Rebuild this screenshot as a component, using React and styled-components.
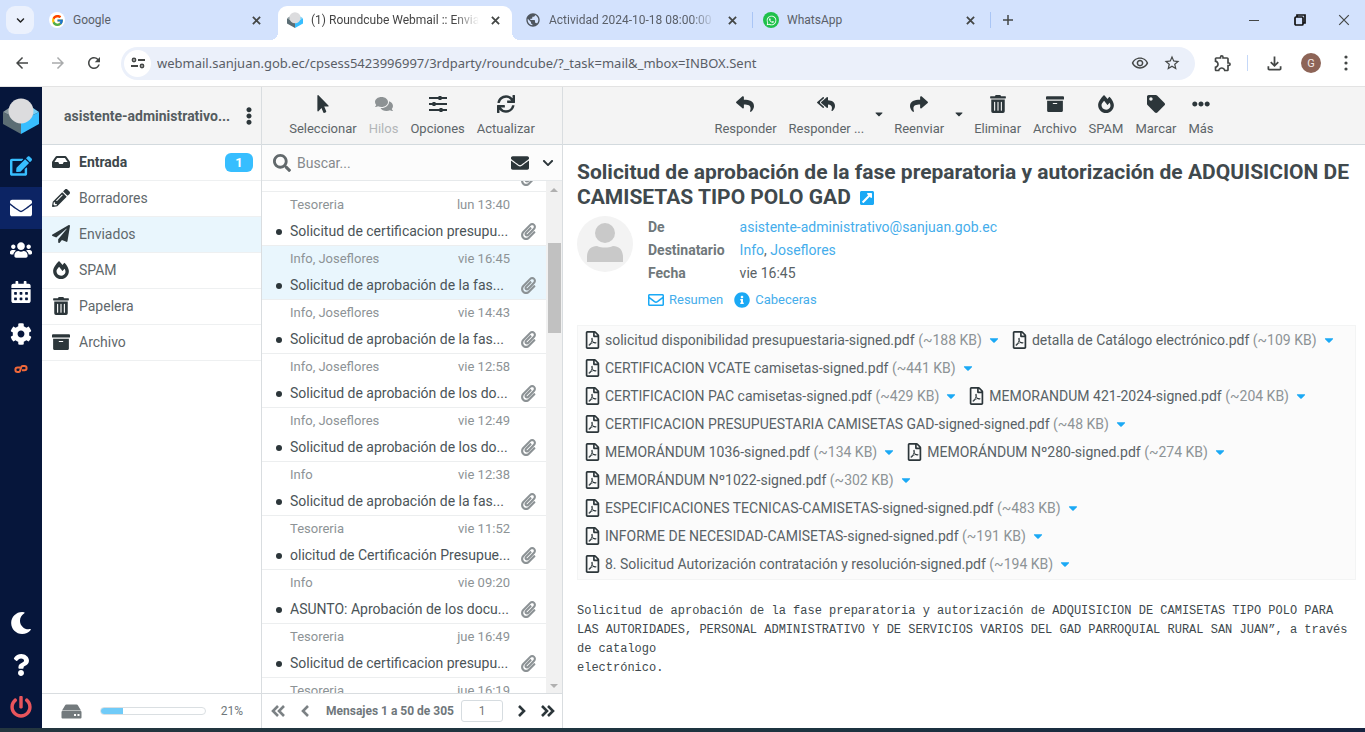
import React, { useEffect, useRef } from "react";
import styled, { createGlobalStyle, css } from "styled-components";
import {
  FaArchive,
  FaCalendarAlt,
  FaCaretDown,
  FaChevronDown,
  FaCog,
  FaComments,
  FaEdit,
  FaEllipsisH,
  FaEllipsisV,
  FaEnvelope,
  FaExternalLinkSquareAlt,
  FaFireAlt,
  FaInbox,
  FaInfoCircle,
  FaMoon,
  FaMousePointer,
  FaPaperclip,
  FaPaperPlane,
  FaPencilAlt,
  FaPowerOff,
  FaQuestion,
  FaRegEnvelope,
  FaRegFilePdf,
  FaReply,
  FaReplyAll,
  FaSearch,
  FaShare,
  FaSync,
  FaTag,
  FaTrashAlt,
  FaUsers,
  FaWhatsapp,
} from "react-icons/fa";
import { FcGoogle } from "react-icons/fc";
import {
  MdArrowBack,
  MdArrowForward,
  MdOutlineExtension,
  MdOutlineFileDownload,
  MdOutlineRemoveRedEye,
  MdPublic,
  MdRefresh,
  MdStarBorder,
} from "react-icons/md";

const GlobalStyle = createGlobalStyle`
  * {
    box-sizing: border-box;
  }
  body {
    margin: 0;
    font-family: Roboto, sans-serif;
    font-size: 14px;
    color: #2c363a;
  }
  button {
    border: 0;
    padding: 0;
    background: none;
    font: inherit;
    color: inherit;
    cursor: pointer;
  }
  a {
    color: inherit;
    text-decoration: none;
  }
  ul {
    list-style: none;
    margin: 0;
    padding: 0;
  }
  svg {
    flex: none;
  }
`;

const Page = styled.div`
  display: flex;
  flex-direction: column;
  height: 100vh;
  overflow: hidden;
  background: #fff;
`;

/* browser */
const TabStrip = styled.div`
  display: flex;
  align-items: flex-end;
  height: 40px;
  padding-left: 6px;
  background: #d3e2fd;
  font: 12px Roboto, sans-serif;
  color: #5a5f68;
`;
const TabSearch = styled.button`
  display: flex;
  align-items: center;
  justify-content: center;
  width: 28px;
  height: 28px;
  margin: 0 6px 6px 0;
  border-radius: 9px;
  background: #ebf1fd;
  font-size: 9px;
  color: #222;
`;
const Tab = styled.div`
  position: relative;
  display: flex;
  align-items: center;
  flex: 0 1 238px;
  min-width: 0;
  height: 34px;
  padding: 0 14px 6px 9px;
  gap: 8px;

  ${(props) =>
    props.$line &&
    css`
      &::after {
        content: "";
        position: absolute;
        right: 1px;
        top: 6px;
        width: 1px;
        height: 16px;
        background: #a9c5f5;
      }
    `}
  ${(props) =>
    props.$active &&
    css`
      margin-right: 4px;
      flex-basis: 234px;
      padding-right: 9px;
      background: #fff;
      border-radius: 9px 9px 0 0;
      color: #444;
      &::before,
      &::after {
        content: "";
        position: absolute;
        bottom: 0;
        width: 8px;
        height: 8px;
      }
      &::before {
        left: -8px;
        background: radial-gradient(circle at 0 0, transparent 8px, #fff 8px);
      }
      &::after {
        right: -8px;
        background: radial-gradient(circle at 100% 0, transparent 8px, #fff 8px);
      }
    `}
`;
const TabTitle = styled.span`
  flex: 1;
  min-width: 0;
  overflow: hidden;
  white-space: nowrap;
  mask-image: ${(props) => (props.$fade ? "linear-gradient(to right, #000 85%, transparent)" : "none")};
`;
const Favicon = styled.span`
  display: flex;
  align-items: center;
  justify-content: center;
  width: 16px;
  height: 16px;
  border-radius: 50%;
  font-size: ${(props) => props.$size || 16}px;
  background: ${(props) => props.$bg || "none"};
  color: ${(props) => props.$color || "#4f565e"};
`;
const IconButton = styled.button`
  display: flex;
  align-items: center;
  justify-content: center;
  width: ${(props) => props.$width || 16}px;
  height: ${(props) => props.$height || 16}px;
  font-size: ${(props) => props.$size || 18}px;
  color: ${(props) => props.$color || "#444746"};
`;
const WindowButtons = styled.div`
  display: flex;
  align-items: center;
  height: 40px;
  margin-left: auto;
`;
const BrowserBar = styled.div`
  display: flex;
  align-items: center;
  height: 46px;
  padding: 0 6px 0 4px;
  background: #fff;
`;
const Omnibox = styled.div`
  flex: 1;
  display: flex;
  align-items: center;
  height: 33px;
  margin: 0 14px 0 9px;
  padding: 0 7px 0 3px;
  border-radius: 17px;
  background: #ebf0fa;
`;
const SiteInfo = styled.button`
  display: flex;
  align-items: center;
  justify-content: center;
  width: 27px;
  height: 27px;
  border-radius: 50%;
  background: #fff;
`;
const Address = styled.input`
  flex: 1;
  min-width: 0;
  margin-left: 6px;
  padding: 0;
  border: 0;
  outline: 0;
  background: none;
  font: 13px "Noto Sans", "Open Sans", sans-serif;
  color: #5a5e66;
`;
const BarLine = styled.span`
  width: 1px;
  height: 16px;
  margin: 0 8px 0 10px;
  background: #c5d8f8;
`;
const Profile = styled.button`
  width: 20px;
  height: 20px;
  margin: 0 12px 0 9px;
  border-radius: 50%;
  background: #8d6457;
  color: #f3e9e5;
  font-size: 11px;
`;
const TaskBar = styled.footer`
  height: 4px;
  background: linear-gradient(to right, #24363f, #1c3440 60%, #16233f);
`;

/* webmail */
const Layout = styled.div`
  flex: 1;
  min-height: 0;
  display: grid;
  grid-template-columns: 42px 220px 301px minmax(0, 1fr);
  border-top: 1px solid #e3e3e3;
`;
const TaskMenu = styled.nav`
  display: flex;
  flex-direction: column;
  background: #06163b;
`;
const Logo = styled.div`
  display: flex;
  align-items: center;
  justify-content: center;
  height: 58px;
`;
const TaskLink = styled.a`
  display: flex;
  align-items: center;
  justify-content: center;
  height: ${(props) => (props.$small ? 28 : 42)}px;
  margin-top: ${(props) => (props.$push ? "auto" : "0")};
  font-size: ${(props) => props.$size || 22}px;
  color: ${(props) => props.$color || "#fff"};
  background: ${(props) => (props.$active ? "#0c2464" : "none")};
`;
const Column = styled.section`
  display: flex;
  flex-direction: column;
  min-width: 0;
  min-height: 0;
  border-right: ${(props) => (props.$last ? "0" : "1px solid #d9dde0")};
`;
const Header = styled.header`
  display: flex;
  align-items: center;
  justify-content: ${(props) => (props.$spread ? "space-between" : "center")};
  flex: none;
  height: 58px;
  padding: ${(props) => (props.$spread ? "0 8px 0 22px" : "0")};
  background: #f4f4f4;
  border-bottom: 1px solid #d3dade;
`;
const Account = styled.h1`
  margin: 0;
  font-size: 14px;
  font-weight: 700;
  color: #555c60;
`;
const Folder = styled.a`
  display: flex;
  align-items: center;
  height: 36px;
  padding: 0 8px 1px 10px;
  gap: 9px;
  border-bottom: 1px solid #eef0f1;
  background: ${(props) => (props.$active ? "#e9f6fd" : "#fff")};
  font-weight: ${(props) => (props.$unread ? 700 : 400)};
  color: ${(props) => (props.$unread ? "#3d474b" : "#5f686c")};
  svg {
    width: 18px;
    font-size: 18px;
    color: #2c363a;
  }
`;
const Badge = styled.span`
  width: 28px;
  margin-left: auto;
  border-radius: 6px;
  background: #37beff;
  color: #fff;
  font-size: 13px;
  line-height: 19px;
  text-align: center;
`;
const PanelFooter = styled.footer`
  display: flex;
  align-items: center;
  flex: none;
  height: 35px;
  margin-top: auto;
  padding: ${(props) => props.$padding};
  border-top: 1px solid #d9dde0;
  background: #fff;
  font-size: 12px;
  color: #6f777b;
`;
const QuotaBar = styled.div`
  flex: 1;
  height: 8px;
  margin: 0 15px 0 18px;
  border: 1px solid #dadfe2;
  border-radius: 4px;
  overflow: hidden;
`;
const QuotaFill = styled.div`
  height: 100%;
  background: #70cbf8;
`;

const ToolButton = styled.button`
  display: flex;
  flex-direction: column;
  align-items: center;
  gap: 8px;
  padding: 0 6px;
  font-size: 13px;
  line-height: 16px;
  white-space: nowrap;
  color: ${(props) => (props.$faded ? "#b3b6b8" : "#5d6569")};
  svg {
    font-size: 18px;
    color: ${(props) => (props.$faded ? "#8d9294" : "#2c363a")};
  }
`;
const ToolCaret = styled.button`
  width: 18px;
  height: 18px;
  font-size: 12px;
  color: #2c363a;
`;
const SearchBar = styled.div`
  display: flex;
  align-items: center;
  flex: none;
  height: 36px;
  padding: 0 0 0 11px;
  border-bottom: 1px solid #e6e9eb;
  background: #fcfcfc;
`;
const SearchInput = styled.input`
  flex: 1;
  min-width: 0;
  margin: 0 6px;
  padding: 0;
  border: 0;
  outline: 0;
  background: none;
  font: 14px Roboto, sans-serif;
  color: #555;
  &::placeholder {
    color: #85898c;
  }
`;
const ListArea = styled.div`
  flex: 1;
  min-height: 0;
  display: flex;
`;
const MailList = styled.ul`
  flex: 1;
  min-width: 0;
  overflow: hidden;
`;
const MailRow = styled.li`
  display: grid;
  grid-template-columns: minmax(0, 1fr) auto;
  align-content: start;
  column-gap: 13px;
  height: 54px;
  padding: 3px 9px 0 28px;
  border-top: 1px solid #eceeef;
  background: ${(props) => (props.$active ? "#e9f6fd" : "#fff")};
`;
const MailMeta = styled.div`
  display: flex;
  justify-content: space-between;
  grid-column: 1;
  font-size: 13px;
  line-height: 20px;
  color: #8d9396;
  span + span {
    margin-right: -3px;
  }
`;
const MailSubject = styled.a`
  position: relative;
  grid-column: 1;
  font-size: 14px;
  line-height: 32px;
  white-space: nowrap;
  color: #4b5458;
  &::before {
    content: "";
    position: absolute;
    left: -14px;
    top: 14px;
    width: 6px;
    height: 6px;
    border-radius: 50%;
    background: #2c363a;
  }
`;
const Clip = styled(FaPaperclip)`
  grid-column: 2;
  align-self: center;
  font-size: 17px;
  color: #8c9295;
`;
const ScrollTrack = styled.div`
  display: flex;
  flex-direction: column;
  align-items: center;
  width: 16px;
  padding: 5px 1px;
  background: #f1f1f1;
`;
const ScrollArrow = styled.span`
  border: 4px solid transparent;
  border-top: ${(props) => (props.$down ? "4px solid #b0b0b0" : "0")};
  border-bottom: ${(props) => (props.$down ? "0" : "4px solid #b0b0b0")};
  margin-top: ${(props) => (props.$down ? "auto" : "2px")};
`;
const ScrollThumb = styled.div`
  width: 13px;
  height: 90px;
  margin-top: 51px;
  background: #c1c1c1;
`;
const PageCount = styled.span`
  flex: 1;
  text-align: center;
  white-space: nowrap;
  font-weight: 700;
`;
const PageInput = styled.input`
  width: 42px;
  height: 22px;
  margin-right: 7px;
  border: 1px solid #d6dce0;
  border-radius: 3px;
  text-align: center;
  font: 12px Roboto, sans-serif;
  color: #777;
`;

const Message = styled.article`
  flex: 1;
  min-height: 0;
  overflow: hidden;
  padding: 15px 9px 0 14px;
`;
const Subject = styled.h2`
  margin: 0 0 6px;
  font-size: 21px;
  line-height: 25px;
  font-weight: 700;
  color: #40494d;
  svg {
    margin-left: 3px;
    font-size: 16px;
    vertical-align: -2px;
    color: #1ba9f5;
  }
`;
const Envelope = styled.div`
  display: flex;
  gap: 15px;
`;
const Photo = styled.svg`
  width: 56px;
  height: 56px;
`;
const Headers = styled.table`
  border-collapse: collapse;
  line-height: 23px;
  th {
    padding: 0 15px 0 0;
    text-align: left;
    font-size: 14px;
    font-weight: 700;
    color: #70787b;
  }
  td {
    padding: 0;
    font-size: 14px;
    color: #596266;
  }
  td a {
    color: #45adeb;
  }
`;
const HeaderLinks = styled.div`
  display: flex;
  gap: 11px;
  margin-top: 6px;
  margin-bottom: 16px;
  a {
    display: flex;
    align-items: center;
    gap: 5px;
    font-size: 13px;
    line-height: 18px;
    color: #45adeb;
  }
  svg {
    font-size: 16px;
    color: #1ba9f5;
  }
`;
const Attachments = styled.ul`
  display: flex;
  flex-wrap: wrap;
  column-gap: 11px;
  padding: 0 7px 1px;
  border: 1px solid #f3f4f4;
  background: #fbfbfb;
`;
const Attachment = styled.li`
  display: flex;
  align-items: center;
  height: 28px;
  white-space: nowrap;
  font-size: 14px;
  color: #596266;
  > a {
    display: flex;
    align-items: center;
    gap: 5px;
  }
  > a svg {
    width: 15px;
    font-size: 18px;
    color: #2c363a;
  }
  small {
    font-size: 14px;
    color: #8d9396;
  }
  button {
    display: flex;
    margin-left: 5px;
    font-size: 14px;
    color: #1ba9f5;
  }
`;
const Body = styled.div`
  margin-top: 22px;
  white-space: pre-wrap;
  font-family: "Liberation Mono", monospace;
  font-size: 12px;
  line-height: 19px;
  color: #40494d;
`;

const folders = [
  { name: "Entrada", Icon: FaInbox, unread: 1 },
  { name: "Borradores", Icon: FaPencilAlt },
  { name: "Enviados", Icon: FaPaperPlane, active: true },
  { name: "SPAM", Icon: FaFireAlt },
  { name: "Papelera", Icon: FaTrashAlt },
  { name: "Archivo", Icon: FaArchive },
];

const mails = [
  { to: "", date: "", subject: "" },
  { to: "Tesoreria", date: "lun 13:40", subject: "Solicitud de certificacion presupu..." },
  { to: "Info, Joseflores", date: "vie 16:45", subject: "Solicitud de aprobación de la fas...", active: true },
  { to: "Info, Joseflores", date: "vie 14:43", subject: "Solicitud de aprobación de la fas..." },
  { to: "Info, Joseflores", date: "vie 12:58", subject: "Solicitud de aprobación de los do..." },
  { to: "Info, Joseflores", date: "vie 12:49", subject: "Solicitud de aprobación de los do..." },
  { to: "Info", date: "vie 12:38", subject: "Solicitud de aprobación de la fas..." },
  { to: "Tesoreria", date: "vie 11:52", subject: "olicitud de Certificación Presupue..." },
  { to: "Info", date: "vie 09:20", subject: "ASUNTO: Aprobación de los docu..." },
  { to: "Tesoreria", date: "jue 16:49", subject: "Solicitud de certificacion presupu..." },
  { to: "Tesoreria", date: "jue 16:19", subject: "" },
];

const attachments = [
  ["solicitud disponibilidad presupuestaria-signed.pdf", "188 KB"],
  ["detalla de Catálogo electrónico.pdf", "109 KB"],
  ["CERTIFICACION VCATE camisetas-signed.pdf", "441 KB"],
  ["CERTIFICACION PAC camisetas-signed.pdf", "429 KB"],
  ["MEMORANDUM 421-2024-signed.pdf", "204 KB"],
  ["CERTIFICACION PRESUPUESTARIA CAMISETAS GAD-signed-signed.pdf", "48 KB"],
  ["MEMORÁNDUM 1036-signed.pdf", "134 KB"],
  ["MEMORÁNDUM Nº280-signed.pdf", "274 KB"],
  ["MEMORÁNDUM Nº1022-signed.pdf", "302 KB"],
  ["ESPECIFICACIONES TECNICAS-CAMISETAS-signed-signed.pdf", "483 KB"],
  ["INFORME DE NECESIDAD-CAMISETAS-signed-signed.pdf", "191 KB"],
  ["8. Solicitud Autorización contratación y resolución-signed.pdf", "194 KB"],
];

const bodyText =
  "Solicitud de aprobación de la fase preparatoria y autorización de ADQUISICION DE CAMISETAS TIPO POLO PARA LAS AUTORIDADES, PERSONAL ADMINISTRATIVO Y DE SERVICIOS VARIOS DEL GAD PARROQUIAL RURAL SAN JUAN”, a través de catalogo\nelectrónico.";

const CubeLogo = ({ size }) => (
  <svg width={size} height={size} viewBox="0 0 36 36" aria-hidden="true">
    <path d="M0 14 18 23v13L0 26z" fill="#5b6d74" />
    <path d="M36 14 18 23v13l18-10z" fill="#37beff" />
    <path d="M0 14 6 10l12 13z" fill="#8b9a9e" />
    <path d="M36 14 30 10 18 23z" fill="#73cff8" />
    <circle cx="18" cy="13" r="12.5" fill="#dcdcde" />
  </svg>
);

const CpanelIcon = () => (
  <svg width="14" height="10" viewBox="0 0 14 10" fill="none" stroke="currentColor" strokeWidth="2" aria-hidden="true">
    <path d="M6 3.500H3.600a2.200 2.200 0 0 0 0 4.400h1.200q1 0 1.300-1l1.200-4q.3-1 1.300-1h1.800a2.200 2.200 0 0 1 0 4.400H8" />
  </svg>
);

const DiskIcon = () => (
  <svg width="21" height="15" viewBox="0 0 21 15" fill="#737a7d" aria-hidden="true">
    <path d="M4 1.500Q4.400.5 5.500.5h10q1.100 0 1.500 1l3 5H1z" />
    <path fillRule="evenodd" d="M1.500 7h18q1 0 1 1v5.500q0 1-1 1h-18q-1 0-1-1v-5.500q0-1 1-1zM13 10v2h2v-2zM16.500 10v2h2v-2z" />
  </svg>
);

const SlidersIcon = () => (
  <svg width="18" height="18" viewBox="0 0 18 18" fill="none" stroke="currentColor" strokeWidth="2">
    <path d="M0 3h18M0 9h18M0 15h18" />
    <path d="M11 1v4M5 7v4M12 13v4" strokeWidth="3" />
  </svg>
);

const TuneIcon = () => (
  <svg width="14" height="12" viewBox="0 0 14 12" fill="none" stroke="#444746" strokeWidth="2">
    <circle cx="3" cy="3" r="1.6" strokeWidth="1.6" />
    <path d="M7 3h7M0 9h7" />
    <circle cx="11" cy="9" r="1.6" strokeWidth="1.6" />
  </svg>
);

const Cross = ({ size, width }) => (
  <svg width={size} height={size} viewBox="0 0 10 10" stroke="currentColor" strokeWidth={width}>
    <path d="M1 1l8 8M9 1L1 9" />
  </svg>
);

// single or double angle used by the pager
const Angle = ({ double, right }) => (
  <svg
    width={double ? 15 : 9}
    height="14"
    viewBox={double ? "0 0 15 14" : "0 0 9 14"}
    fill="none"
    stroke="currentColor"
    strokeWidth="2.6"
  >
    {right ? <path d="M2 2l5 5-5 5" /> : <path d="M7 2L2 7l5 5" />}
    {double && (right ? <path d="M8 2l5 5-5 5" /> : <path d="M13 2L8 7l5 5" />)}
  </svg>
);

const Tool = ({ Icon, label, faded }) => (
  <ToolButton $faded={faded} disabled={faded}>
    <Icon />
    {label}
  </ToolButton>
);

const BrowserTab = ({ title, icon, active, fade, line }) => (
  <Tab $active={active} $line={line}>
    {icon}
    <TabTitle $fade={fade}>{title}</TabTitle>
    <IconButton aria-label="Cerrar pestaña">
      <Cross size={9} width={2} />
    </IconButton>
  </Tab>
);

const Browser = () => (
  <>
    <TabStrip>
      <TabSearch aria-label="Buscar pestañas">
        <FaChevronDown />
      </TabSearch>
      <BrowserTab title="Google" icon={<Favicon $bg="#fff" $size={13}><FcGoogle /></Favicon>} />
      <BrowserTab active fade title="(1) Roundcube Webmail :: Envia" icon={<CubeLogo size={16} />} />
      <BrowserTab fade line title="Actividad 2024-10-18 08:00:00" icon={<Favicon><MdPublic /></Favicon>} />
      <BrowserTab line title="WhatsApp" icon={<Favicon $bg="#1fc14b" $color="#fff" $size={11}><FaWhatsapp /></Favicon>} />
      <IconButton $width={32} $height={40} aria-label="Nueva pestaña">
        <svg width="10" height="10" stroke="currentColor" strokeWidth="1.5">
          <path d="M5 0v10M0 5h10" />
        </svg>
      </IconButton>
      <WindowButtons>
        <IconButton $width={46} $height={40} aria-label="Minimizar">
          <svg width="10" height="10" stroke="currentColor"><path d="M0 5.500h10" /></svg>
        </IconButton>
        <IconButton $width={46} $height={40} aria-label="Restaurar" $color="#111">
          <svg width="12" height="12" viewBox="0 0 12 12" fill="none" stroke="currentColor" strokeWidth="1.700">
            <rect x="1" y="3" width="8" height="8" rx="1" />
            <path d="M3 3V1h8v8H9" />
          </svg>
        </IconButton>
        <IconButton $width={42} $height={40} aria-label="Cerrar">
          <Cross size={12} width={1} />
        </IconButton>
      </WindowButtons>
    </TabStrip>
    <BrowserBar>
      <IconButton $width={36} aria-label="Atrás"><MdArrowBack /></IconButton>
      <IconButton $width={36} aria-label="Adelante" $color="#a9abac"><MdArrowForward /></IconButton>
      <IconButton $width={36} aria-label="Recargar"><MdRefresh /></IconButton>
      <Omnibox>
        <SiteInfo aria-label="Información del sitio"><TuneIcon /></SiteInfo>
        <Address
          aria-label="Dirección"
          readOnly
          value="webmail.sanjuan.gob.ec/cpsess5423996997/3rdparty/roundcube/?_task=mail&_mbox=INBOX.Sent"
        />
        <IconButton $width={32} aria-label="Ver"><MdOutlineRemoveRedEye /></IconButton>
        <IconButton $width={32} aria-label="Favorito"><MdStarBorder /></IconButton>
      </Omnibox>
      <IconButton $width={28} $size={20} aria-label="Extensiones"><MdOutlineExtension /></IconButton>
      <BarLine />
      <IconButton $width={36} $size={21} aria-label="Descargas"><MdOutlineFileDownload /></IconButton>
      <Profile>G</Profile>
      <IconButton $width={26} aria-label="Menú">
        <svg width="4" height="16" fill="currentColor">
          <circle cx="2" cy="2" r="1.6" />
          <circle cx="2" cy="8" r="1.6" />
          <circle cx="2" cy="14" r="1.6" />
        </svg>
      </IconButton>
    </BrowserBar>
  </>
);

const MailListColumn = () => {
  const listRef = useRef(null);

  useEffect(() => {
    listRef.current.scrollTop = 44;
  }, []);

  return (
    <Column>
      <Header>
        <Tool Icon={FaMousePointer} label="Seleccionar" />
        <Tool Icon={FaComments} label="Hilos" faded />
        <Tool Icon={SlidersIcon} label="Opciones" />
        <Tool Icon={FaSync} label="Actualizar" />
      </Header>
      <SearchBar>
        <FaSearch size={18} color="#62696c" />
        <SearchInput type="text" placeholder="Buscar..." aria-label="Buscar" />
        <IconButton $width={28} aria-label="No leídos" $color="#2c363a"><FaEnvelope /></IconButton>
        <IconButton $width={28} $size={12} aria-label="Opciones de búsqueda" $color="#2c363a"><FaChevronDown /></IconButton>
      </SearchBar>
      <ListArea>
        <MailList ref={listRef}>
          {mails.map((mail, index) => (
            <MailRow key={index} $active={mail.active}>
              <MailMeta>
                <span>{mail.to}&nbsp;</span>
                <span>{mail.date}</span>
              </MailMeta>
              <MailSubject href="#">{mail.subject}&nbsp;</MailSubject>
              <Clip />
            </MailRow>
          ))}
        </MailList>
        <ScrollTrack>
          <ScrollArrow />
          <ScrollThumb />
          <ScrollArrow $down />
        </ScrollTrack>
      </ListArea>
      <PanelFooter $padding="0 0 0 3px">
        <IconButton $width={26} aria-label="Primera página" $color="#7b8184"><Angle double /></IconButton>
        <IconButton $width={28} aria-label="Página anterior" $color="#7b8184"><Angle /></IconButton>
        <PageCount>Mensajes 1 a 50 de 305</PageCount>
        <PageInput defaultValue="1" aria-label="Página" />
        <IconButton $width={22} aria-label="Página siguiente" $color="#2c363a"><Angle right /></IconButton>
        <IconButton $width={30} aria-label="Última página" $color="#2c363a"><Angle double right /></IconButton>
      </PanelFooter>
    </Column>
  );
};

const MessageColumn = () => (
  <Column as="main" $last>
    <Header>
      <Tool Icon={FaReply} label="Responder" />
      <Tool Icon={FaReplyAll} label="Responder ..." />
      <ToolCaret aria-label="Opciones de responder"><FaCaretDown /></ToolCaret>
      <Tool Icon={FaShare} label="Reenviar" />
      <ToolCaret aria-label="Opciones de reenviar"><FaCaretDown /></ToolCaret>
      <Tool Icon={FaTrashAlt} label="Eliminar" />
      <Tool Icon={FaArchive} label="Archivo" />
      <Tool Icon={FaFireAlt} label="SPAM" />
      <Tool Icon={FaTag} label="Marcar" />
      <Tool Icon={FaEllipsisH} label="Más" />
    </Header>
    <Message>
      <Subject>
        Solicitud de aprobación de la fase preparatoria y autorización de ADQUISICION DE CAMISETAS TIPO POLO GAD{" "}
        <FaExternalLinkSquareAlt />
      </Subject>
      <Envelope>
        <Photo viewBox="0 0 56 56" aria-hidden="true">
          <circle cx="28" cy="28" r="28" fill="#f3f3f3" />
          <circle cx="28" cy="17" r="10" fill="#c9c9c9" />
          <path d="M10 46v-5c0-7 4-11 10-11 5 2 11 2 16 0 6 0 10 4 10 11v5z" fill="#c9c9c9" />
        </Photo>
        <div>
          <Headers>
            <tbody>
              <tr>
                <th scope="row">De</th>
                <td><a href="#">asistente-administrativo@sanjuan.gob.ec</a></td>
              </tr>
              <tr>
                <th scope="row">Destinatario</th>
                <td><a href="#">Info</a>, <a href="#">Joseflores</a></td>
              </tr>
              <tr>
                <th scope="row">Fecha</th>
                <td>vie 16:45</td>
              </tr>
            </tbody>
          </Headers>
          <HeaderLinks>
            <a href="#"><FaRegEnvelope />Resumen</a>
            <a href="#"><FaInfoCircle />Cabeceras</a>
          </HeaderLinks>
        </div>
      </Envelope>
      <Attachments>
        {attachments.map(([name, size]) => (
          <Attachment key={name}>
            <a href="#">
              <FaRegFilePdf />
              <span>
                {name} <small>(~{size})</small>
              </span>
            </a>
            <button aria-label="Opciones del adjunto"><FaCaretDown /></button>
          </Attachment>
        ))}
      </Attachments>
      <Body>{bodyText}</Body>
    </Message>
  </Column>
);

const App = () => {
  return (
    <Page>
      <GlobalStyle />
      <Browser />
      <Layout>
        <TaskMenu>
          <Logo><CubeLogo size={36} /></Logo>
          <TaskLink href="#" aria-label="Redactar" $color="#37beff"><FaEdit /></TaskLink>
          <TaskLink href="#" aria-label="Correo" $active><FaEnvelope /></TaskLink>
          <TaskLink href="#" aria-label="Contactos"><FaUsers /></TaskLink>
          <TaskLink href="#" aria-label="Calendario"><FaCalendarAlt /></TaskLink>
          <TaskLink href="#" aria-label="Configuración"><FaCog /></TaskLink>
          <TaskLink href="#" aria-label="cPanel" $small $color="#f0683a"><CpanelIcon /></TaskLink>
          <TaskLink href="#" aria-label="Modo oscuro" $push><FaMoon /></TaskLink>
          <TaskLink href="#" aria-label="Acerca de"><FaQuestion /></TaskLink>
          <TaskLink href="#" aria-label="Cerrar sesión" $color="#e9555c"><FaPowerOff /></TaskLink>
        </TaskMenu>

        <Column>
          <Header $spread>
            <Account>asistente-administrativo...</Account>
            <IconButton $width={8} aria-label="Menú de cuenta" $color="#2c363a"><FaEllipsisV /></IconButton>
          </Header>
          {/* folders */}
          <nav>
            {folders.map(({ name, Icon, unread, active }) => (
              <Folder key={name} href="#" $active={active} $unread={unread}>
                <Icon />
                {name}
                {unread && <Badge>{unread}</Badge>}
              </Folder>
            ))}
          </nav>
          <PanelFooter $padding="0 18px 0 19px">
            <DiskIcon />
            <QuotaBar>
              <QuotaFill style={{ width: "21%" }} />
            </QuotaBar>
            21%
          </PanelFooter>
        </Column>

        <MailListColumn />
        <MessageColumn />
      </Layout>
      <TaskBar />
    </Page>
  );
};

export default App;
